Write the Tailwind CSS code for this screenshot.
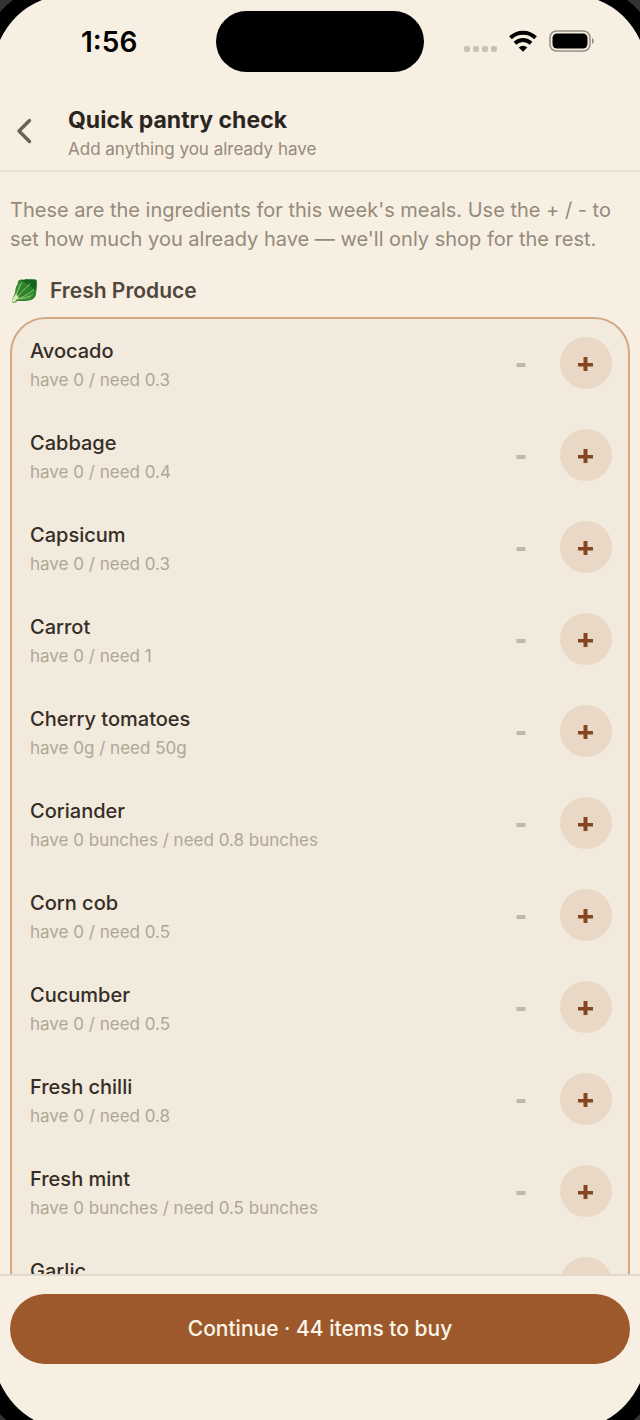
<!doctype html>
<html lang="en">

<head>
    <meta charset="UTF-8" />
    <meta name="viewport" content="width=device-width, initial-scale=1.0" />
    <title>Quick pantry check</title>
    <script src="https://cdn.jsdelivr.net/npm/@tailwindcss/browser@4"></script>
</head>

<body class="font-[Inter,sans-serif] bg-[#f7efe2]">
    <div class="relative h-screen flex flex-col overflow-hidden bg-[#f7efe2]">

        <!--Status bar-->
        <div class="shrink-0 grid grid-cols-3 items-center h-[82px] px-2">
            <p class="pl-[73px] pt-0.5 text-[28px] font-semibold text-black">1:56</p>
            <div class="justify-self-center w-[208px] h-[61px] rounded-full bg-black"></div>
            <div class="flex items-center justify-end gap-3 pr-[37px]">
                <svg viewBox="0 0 34 22" class="w-[34px] h-[22px]" fill="#c9c1b5">
                    <rect x="1" y="16" width="6" height="6" rx="2" />
                    <rect x="10" y="16" width="6" height="6" rx="2" />
                    <rect x="19" y="16" width="6" height="6" rx="2" />
                    <rect x="28" y="16" width="6" height="6" rx="2" />
                </svg>
                <svg viewBox="0 0 28 22" class="w-7 h-[22px]" fill="none" stroke="#000" stroke-width="4">
                    <path d="M1.500 7.800a18 18 0 0 1 25 0" />
                    <path d="M6 13.200a11.500 11.500 0 0 1 16 0" />
                    <path d="M14 21.800l-4.300-4.300a6.200 6.200 0 0 1 8.600 0z" fill="#000" stroke="none" />
                </svg>
                <svg viewBox="0 0 46 22" class="w-[46px] h-[22px]">
                    <rect x="1" y="1" width="40" height="20" rx="6.5" fill="none" stroke="#948f87" stroke-width="1.5" />
                    <rect x="3.5" y="3.5" width="35" height="15" rx="4.5" fill="#000" />
                    <path d="M43 8v6c2.4-1 2.4-5 0-6z" fill="#948f87" />
                </svg>
            </div>
        </div>

        <!--Header-->
        <header class="shrink-0 flex items-center h-[90px] pt-4 px-4 border-b-2 border-[#e8dfd1]">
            <button aria-label="Back" class="w-[52px] h-14 flex items-start pt-3">
                <svg viewBox="0 0 16 26" fill="none" stroke="#6b6257" stroke-width="3.400" class="w-4 h-[26px]">
                    <path stroke-linecap="round" stroke-linejoin="round" d="M13.500 2.500 3 13l10.500 10.500" />
                </svg>
            </button>
            <div>
                <h1 class="text-[23px] leading-[30px] font-bold text-[#2b261f]">Quick pantry check</h1>
                <p class="text-[17px] leading-7 text-[#958a7b]">Add anything you already have</p>
            </div>
        </header>

        <!--Ingredients-->
        <main class="flex-1 min-h-0 overflow-hidden px-[10px] pt-6">
            <p class="text-xl leading-[29px] text-[#958a7b]">These are the ingredients for this week's meals. Use the + / - to set how much you already have — we'll only shop for the rest.</p>

            <h2 class="flex items-center gap-3 mt-[23px] text-[21px] leading-7 font-semibold text-[#51463c]">
                <svg viewBox="0 0 28 28" class="size-7">
                    <path d="M2 24c0-3 2-5 3-8 .6-3 .3-6 2.500-8.500C8 5 8 3 10 3c2-1 3 .2 5-.6 2-.8 3 .4 5-.1 2 .2 4-.6 6 .5 1.500 1 .8 2.500.9 4.500-.2 2 .3 3-.3 5 .2 2-.8 3-.6 5-.4 3-2 4-3.500 5-2 1.500-3.500.8-5 1.500-3 .8-6-.2-8 .2-2 .1-3.500.3-4.500 1.500-1.500 1.200-3 .3-3-1.500z" fill="#2c8230" />
                    <path d="M11 3.500c5-1.500 10-1 15-.5.800 4-.3 8-1.500 10-2-3-6-6-13.500-9.500z" fill="#17641f" />
                    <path d="M8 8c-1 4-2.500 8-3.500 12l3-2c1-4 1.500-8 3-12zM10 20c5 .5 9-1 14-5-.5 4-3 7-7 7.500-3 .5-6 0-8.500.4z" fill="#46993a" />
                    <path d="M4.500 22c2-6 5-11 7-16M5 23c4-5 9-11 15-16M5.500 23c5-2 12-5 18-10M7 22c4-.5 8-.5 13-3" fill="none" stroke="#91c668" stroke-width="1" stroke-linecap="round" />
                    <path d="M2 23.500c1-3 2-4.500 4-6.500l3 3.500c-1.500 1-3 2-4 4.500-1.500 1-3 .3-3-1.500z" fill="#d6e6b2" />
                </svg>
                Fresh Produce
            </h2>

            <ul id="ingredients" class="mt-3 rounded-[36px] border-2 border-[#d3a883] bg-[#f2eadd] overflow-hidden"></ul>
        </main>

        <!--Continue-->
        <footer class="shrink-0 h-[146px] px-[10px] pt-[18px] border-t-2 border-[#e3dacd] bg-[#f7efe2]">
            <button class="w-full h-[70px] rounded-full bg-[#9d592c] text-[21px] font-medium text-[#fbf5ea]">Continue · 44 items to buy</button>
        </footer>

        <!--Phone frame corners-->
        <svg viewBox="0 0 42 40" class="absolute top-0 left-0 w-[42px] h-10">
            <path d="M0 0h42Q14 11 0 40z" fill="#000" />
            <path d="M0 0h13Q6 5 0 12z" fill="#333" />
        </svg>
        <svg viewBox="0 0 42 40" class="absolute top-0 right-0 w-[42px] h-10">
            <path d="M42 0H0Q28 11 42 40z" fill="#000" />
            <path d="M42 0H29Q36 5 42 12z" fill="#333" />
        </svg>
        <svg viewBox="0 0 34 37" class="absolute bottom-0 left-0 w-[34px] h-[37px]">
            <path d="M0 37h34Q12 25 0 0z" fill="#000" />
            <path d="M0 37h6L0 31z" fill="#333" />
        </svg>
        <svg viewBox="0 0 34 37" class="absolute bottom-0 right-0 w-[34px] h-[37px]">
            <path d="M34 37H0Q22 25 34 0z" fill="#000" />
            <path d="M34 37h-6l6-6z" fill="#333" />
        </svg>
    </div>

    <script>
        const ingredients = [
            { name: 'Avocado', need: '0.3', unit: '' },
            { name: 'Cabbage', need: '0.4', unit: '' },
            { name: 'Capsicum', need: '0.3', unit: '' },
            { name: 'Carrot', need: '1', unit: '' },
            { name: 'Cherry tomatoes', need: '50', unit: 'g' },
            { name: 'Coriander', need: '0.8', unit: ' bunches' },
            { name: 'Corn cob', need: '0.5', unit: '' },
            { name: 'Cucumber', need: '0.5', unit: '' },
            { name: 'Fresh chilli', need: '0.8', unit: '' },
            { name: 'Fresh mint', need: '0.5', unit: ' bunches' },
            { name: 'Garlic', need: '1', unit: '' },
        ]

        document.getElementById('ingredients').innerHTML = ingredients.map(({ name, need, unit }) => `
            <li class="flex items-start justify-between h-[92px] pl-[18px] pr-4">
                <div class="pt-[18px]">
                    <h3 class="text-xl leading-7 font-medium text-[#352d26]">${name}</h3>
                    <p class="text-[17px] leading-[30px] text-[#afa698]">have 0${unit} / need ${need}${unit}</p>
                </div>
                <div class="flex gap-3 pt-[18px]">
                    <button aria-label="Remove ${name}" disabled class="size-[52px] flex items-center justify-center">
                        <svg viewBox="0 0 16 16" class="size-4" fill="#c0b8ac"><path d="M2.500 8h9v4h-9z" /></svg>
                    </button>
                    <button aria-label="Add ${name}" class="size-[52px] flex items-center justify-center rounded-full bg-[#ead8c6]">
                        <svg viewBox="0 0 16 16" class="size-4" fill="#85471f"><path d="M5.500 2h4v6H15v3.500H9.500v5h-4v-5H0V8h5.500z" /></svg>
                    </button>
                </div>
            </li>`).join('')
    </script>
</body>

</html>
